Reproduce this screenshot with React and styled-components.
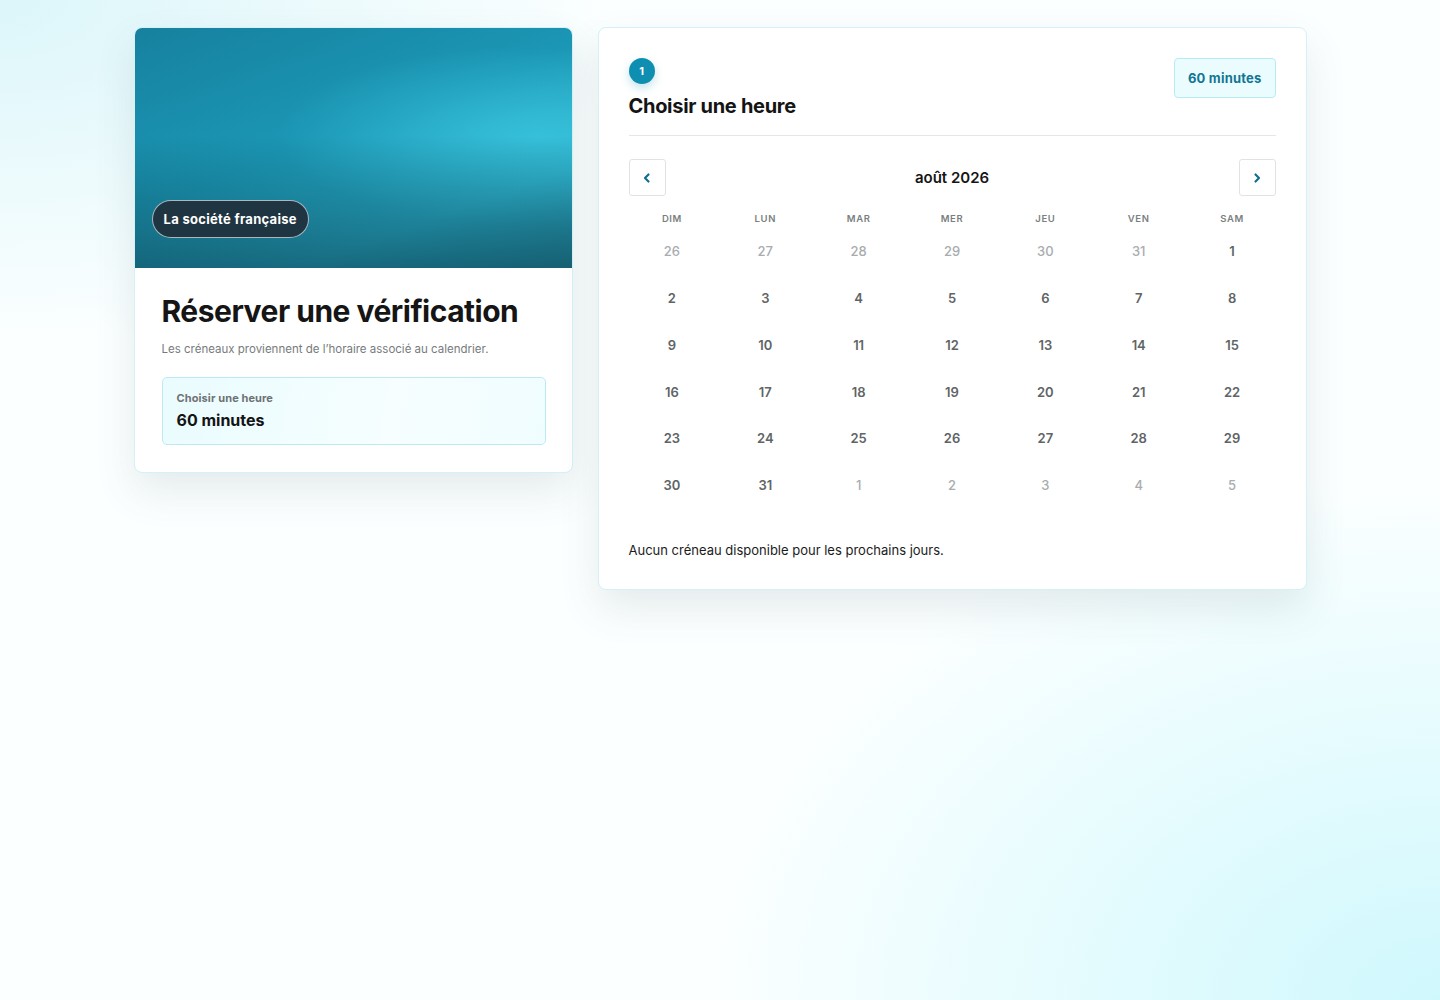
import React from "react";
import styled, { createGlobalStyle } from "styled-components";

const GlobalStyle = createGlobalStyle`
  html, body {
    margin: 0;
    padding: 0;
  }
  body {
    font-family: "Inter", "Liberation Sans", sans-serif;
    color: #161616;
    min-height: 1000px;
    background:
      radial-gradient(ellipse 900px 500px at 0% 0%, #dcf6fa 0%, rgba(255, 255, 255, 0) 70%),
      radial-gradient(ellipse 1000px 700px at 100% 100%, #cff8fd 0%, rgba(255, 255, 255, 0) 75%),
      #fcffff;
  }
`;

const Page = styled.div`
  display: flex;
  align-items: flex-start;
  justify-content: center;
  gap: 25px;
  padding-top: 27px;
  min-height: 1000px;
  box-sizing: border-box;
`;

const Card = styled.div`
  background: #ffffff;
  border: 1px solid #d3f1f6;
  border-radius: 8px;
  box-shadow: 0 18px 40px rgba(60, 90, 100, 0.12);
  overflow: hidden;
  box-sizing: border-box;
`;

const SideCard = styled(Card)`
  width: 439px;
`;

const Cover = styled.div`
  position: relative;
  height: 240px;
  background:
    linear-gradient(180deg, rgba(10, 50, 65, 0) 45%, rgba(10, 60, 75, 0.6) 100%),
    radial-gradient(ellipse 260px 90px at 92% 45%, rgba(60, 200, 225, 0.75) 0%, rgba(60, 200, 225, 0) 100%),
    linear-gradient(160deg, #16819f 0%, #1b97b5 45%, #2ab0cc 75%, #2896ad 100%);
`;

const CompanyPill = styled.span`
  position: absolute;
  left: 17px;
  bottom: 30px;
  padding: 10px 11px;
  border-radius: 20px;
  background: #1f3541;
  border: 1px solid rgba(230, 240, 245, 0.7);
  color: #ffffff;
  font-size: 13px;
  font-weight: 700;
  line-height: 16px;
  letter-spacing: 0.3px;
`;

const SideBody = styled.div`
  padding: 25px 26px 27px 27px;
`;

const Title = styled.h1`
  margin: 0;
  font-size: 30px;
  font-weight: 700;
  letter-spacing: -0.5px;
  line-height: 36px;
  color: #151515;
`;

const Subtitle = styled.p`
  margin: 12px 0 0;
  font-size: 11.5px;
  color: #777b7d;
  line-height: 16px;
`;

const InfoBox = styled.div`
  margin-top: 20px;
  padding: 13px 14px 14px;
  border: 1px solid #bdeaf2;
  border-radius: 5px;
  background: linear-gradient(100deg, #eafcfe 0%, #f6feff 60%, #f0fdff 100%);
`;

const InfoLabel = styled.div`
  font-size: 11px;
  font-weight: 700;
  color: #6e7274;
  line-height: 14px;
  letter-spacing: 0.1px;
`;

const InfoValue = styled.div`
  margin-top: 5px;
  font-size: 16px;
  font-weight: 700;
  color: #141414;
  line-height: 20px;
`;

const MainCard = styled(Card)`
  width: 709px;
  padding: 30px 30px 31px;
`;

const Header = styled.div`
  display: flex;
  justify-content: space-between;
  align-items: flex-start;
  padding-bottom: 16px;
  border-bottom: 1px solid #e4e6e7;
`;

const StepCircle = styled.div`
  width: 26px;
  height: 26px;
  border-radius: 50%;
  background: #0e8fb1;
  color: #ffffff;
  font-size: 11px;
  font-weight: 700;
  display: flex;
  align-items: center;
  justify-content: center;
  box-shadow: 0 4px 10px rgba(14, 143, 177, 0.25);
`;

const StepTitle = styled.h2`
  margin: 9px 0 0;
  font-size: 20px;
  font-weight: 700;
  letter-spacing: -0.3px;
  line-height: 26px;
  color: #141414;
`;

const DurationTag = styled.div`
  padding: 11px 13px;
  border: 1px solid #b6ebf4;
  border-radius: 4px;
  background: #ebfcff;
  color: #117693;
  font-size: 13px;
  font-weight: 700;
  line-height: 16px;
  letter-spacing: 0.2px;
`;

const MonthNav = styled.div`
  display: flex;
  align-items: center;
  justify-content: space-between;
  margin-top: 23px;
`;

const NavButton = styled.button`
  width: 37px;
  height: 37px;
  border: 1px solid #dfe3e5;
  border-radius: 3px;
  background: #ffffff;
  display: flex;
  align-items: center;
  justify-content: center;
  padding: 0;
  cursor: pointer;
`;

const MonthLabel = styled.div`
  font-size: 15px;
  font-weight: 600;
  color: #151515;
`;

const Grid = styled.div`
  display: grid;
  grid-template-columns: repeat(7, 1fr);
  column-gap: 6.5px;
  row-gap: 5.8px;
  margin-top: 17px;
`;

const WeekDay = styled.div`
  text-align: center;
  font-size: 9.5px;
  font-weight: 600;
  letter-spacing: 0.6px;
  color: #7b7f81;
  height: 12px;
  line-height: 12px;
`;

const Day = styled.div`
  height: 41px;
  display: flex;
  align-items: center;
  justify-content: center;
  font-size: 13px;
  font-weight: ${(p) => (p.$muted ? 500 : 600)};
  color: ${(p) => (p.$muted ? "#a9acae" : "#606466")};
`;

const Empty = styled.p`
  margin: 36px 0 0;
  font-size: 13px;
  color: #1b1b1b;
  line-height: 16px;
`;

const Chevron = ({ dir }) => (
  <svg width="12" height="12" viewBox="0 0 12 12" fill="none">
    <path
      d={dir === "left" ? "M7.5 2.5 L4 6 L7.5 9.5" : "M4.5 2.5 L8 6 L4.5 9.5"}
      stroke="#0f6f8c"
      strokeWidth="2.2"
      strokeLinecap="round"
      strokeLinejoin="round"
    />
  </svg>
);

const weekDays = ["DIM", "LUN", "MAR", "MER", "JEU", "VEN", "SAM"];

const days = [
  ...[26, 27, 28, 29, 30, 31].map((n) => ({ n, muted: true })),
  ...Array.from({ length: 31 }, (_, i) => ({ n: i + 1, muted: false })),
  ...[1, 2, 3, 4, 5].map((n) => ({ n, muted: true })),
];

const App = () => {
  return (
    <>
      <GlobalStyle />
      <Page>
        <SideCard>
          <Cover>
            <CompanyPill>La société française</CompanyPill>
          </Cover>
          <SideBody>
            <Title>Réserver une vérification</Title>
            <Subtitle>Les créneaux proviennent de l’horaire associé au calendrier.</Subtitle>
            <InfoBox>
              <InfoLabel>Choisir une heure</InfoLabel>
              <InfoValue>60 minutes</InfoValue>
            </InfoBox>
          </SideBody>
        </SideCard>

        <MainCard>
          <Header>
            <div>
              <StepCircle>1</StepCircle>
              <StepTitle>Choisir une heure</StepTitle>
            </div>
            <DurationTag>60 minutes</DurationTag>
          </Header>

          <MonthNav>
            <NavButton aria-label="Mois précédent">
              <Chevron dir="left" />
            </NavButton>
            <MonthLabel>août 2026</MonthLabel>
            <NavButton aria-label="Mois suivant">
              <Chevron dir="right" />
            </NavButton>
          </MonthNav>

          <Grid>
            {weekDays.map((d) => (
              <WeekDay key={d}>{d}</WeekDay>
            ))}
            {days.map((d, i) => (
              <Day key={i} $muted={d.muted}>
                {d.n}
              </Day>
            ))}
          </Grid>

          <Empty>Aucun créneau disponible pour les prochains jours.</Empty>
        </MainCard>
      </Page>
    </>
  );
};

export default App;
